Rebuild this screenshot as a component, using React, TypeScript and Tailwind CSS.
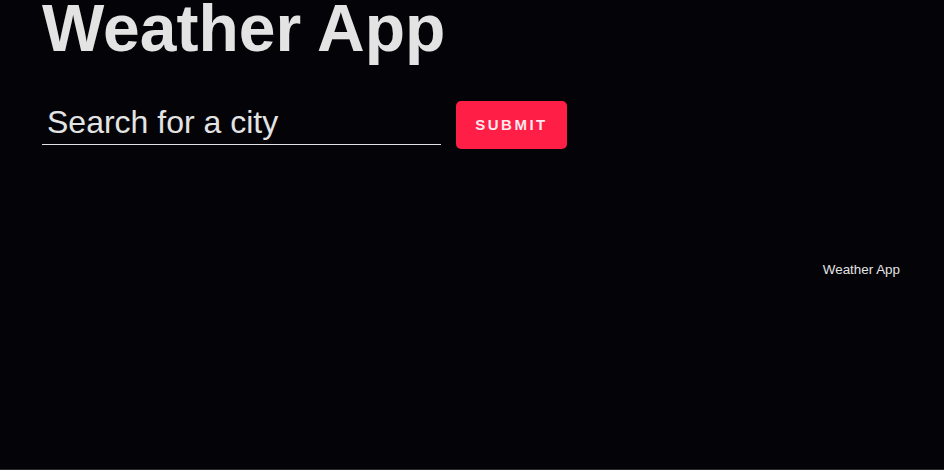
export default function App() {
  return (
    <div className="relative h-[470px] w-full overflow-hidden bg-[#030308] font-['Liberation_Sans',Arial,sans-serif] text-[#e3e3e3] border-b border-[#2a2a2e]">
      <div className="pl-[42px]">
        <h1 className="text-[66px] font-bold leading-[56px] text-[#e3e3e3]">Weather App</h1>
        <form className="mt-[45px] flex items-start gap-[15px]" onSubmit={(e) => e.preventDefault()}>
          <input
            type="text"
            placeholder="Search for a city"
            className="h-[44px] w-[399px] border-b border-[#e3e3e3] bg-transparent pb-[2px] pl-[5px] text-[32px] text-[#e3e3e3] outline-none placeholder:text-[#e3e3e3]"
          />
          <button
            type="submit"
            className="h-[48px] w-[111px] rounded-[5px] bg-[#ff1e46] text-[15px] font-bold tracking-[2.5px] text-[#ffe8ee]"
          >
            SUBMIT
          </button>
        </form>
      </div>
      <div className="mt-[111px] flex justify-end pr-[44px]">
        <span className="text-[13.4px] text-[#e3e3e3]">Weather App</span>
      </div>
    </div>
  );
}
